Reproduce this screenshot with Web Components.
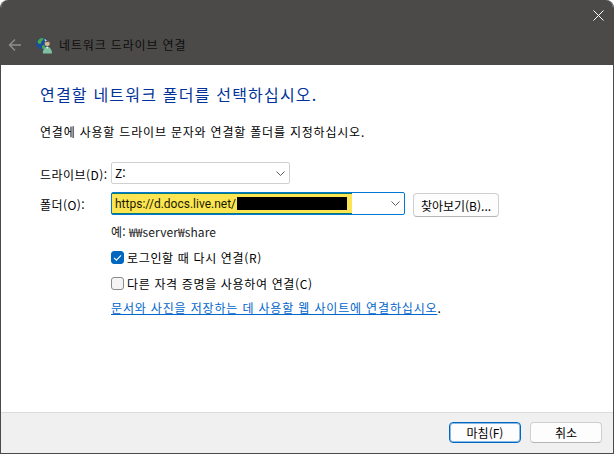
<!DOCTYPE html>
<html lang="ko">
<head>
<meta charset="utf-8">
<title>네트워크 드라이브 연결</title>
<style>
  html, body { margin: 0; padding: 0; background: #fff; }
  body { font-family: "Noto Sans CJK KR", "Liberation Sans", sans-serif; font-size: 12px; color: #000; }
</style>
</head>
<body>

<wizard-window>
  <form-row label="드라이브(D):" slot="form">
    <combo-box value="Z:" width="179"></combo-box>
  </form-row>
  <form-row label="폴더(O):" slot="form" gap="8">
    <combo-box value="https://d.docs.live.net/" width="294" focused></combo-box>
    <win-button>찾아보기(B)...</win-button>
  </form-row>
  <win-check checked slot="options">로그인할 때 다시 연결(R)</win-check>
  <win-check slot="options">다른 자격 증명을 사용하여 연결(C)</win-check>
  <win-button slot="footer" primary>마침(F)</win-button>
  <win-button slot="footer" wide>취소</win-button>
</wizard-window>

<script>
const FONT = '"Noto Sans CJK KR", "Liberation Sans", sans-serif';

// Outer window with title bar, body and footer
class WizardWindow extends HTMLElement {
  constructor() {
    super();
    this.attachShadow({ mode: 'open' });
    this.shadowRoot.innerHTML = `
      <style>
        :host {
          display: flex;
          flex-direction: column;
          width: 614px;
          height: 454px;
          box-sizing: border-box;
          overflow: hidden;
          border-radius: 8px 8px 0 0;
          border: 1px solid #4b4a48;
          border-top: none;
          background: #fff;
          font-family: ${FONT};
        }
        .titlebar {
          height: 65px;
          margin: 0 -1px;
          background: #4b4a48;
          display: flex;
          flex-direction: column;
          flex: none;
        }
        .caption { height: 30px; display: flex; justify-content: flex-end; }
        .close { width: 32px; height: 30px; display: flex; align-items: center; justify-content: center; }
        .nav { display: flex; align-items: center; height: 30px; }
        .back { margin-left: 8px; width: 14px; height: 14px; }
        .globe { margin-left: 14px; width: 17px; height: 17px; }
        .title { margin-left: 6px; font-size: 12px; color: #0d0d0d; line-height: 16px; letter-spacing: 0.85px; }
        .content { flex: 1; padding: 19px 0 0 39px; min-height: 0; }
        h1 {
          margin: 0;
          font-size: 16px;
          font-weight: 400;
          line-height: 20px;
          color: #003399;
          letter-spacing: 1.2px;
        }
        p { margin: 19px 0 0; line-height: 17px; font-size: 12px; letter-spacing: 0.8px; }
        .form { margin-top: 22px; display: flex; flex-direction: column; gap: 8px; }
        .example { margin: 6px 0 0 71px; line-height: 17px; font-size: 12px; color: #1a1a1a; letter-spacing: 0.1px; }
        .options { margin: 9px 0 0 71px; display: flex; flex-direction: column; gap: 9px; }
        .link { margin: 7px 0 0 71px; line-height: 17px; font-size: 12px; color: #000; letter-spacing: 0.84px; }
        .link a { color: #0066cc; text-decoration: underline; }
        .footer {
          flex: none;
          box-sizing: border-box;
          height: 41px;
          background: #f0f0f0;
          border-top: 1px solid #dcdcdc;
          display: flex;
          justify-content: flex-end;
          align-items: flex-start;
          gap: 9px;
          padding: 9px 11px 0 0;
        }
      </style>
      <div class="titlebar">
        <div class="caption">
          <div class="close">
            <svg width="11" height="11" viewBox="0 0 11 11"><path d="M.5.5l10 10M10.5.5l-10 10" stroke="#fff" stroke-width="1" fill="none"/></svg>
          </div>
        </div>
        <div class="nav">
          <svg class="back" viewBox="0 0 14 14"><path d="M13 7H1.5M7 1.5L1.5 7 7 12.5" stroke="#8f8e8c" stroke-width="1.4" fill="none"/></svg>
          <svg class="globe" viewBox="0 0 17 17">
            <circle cx="6" cy="6.5" r="5.8" fill="#174f9e"/>
            <path d="M1.5 4.5C3 2 5 .8 7 1.2c1 1.6-1.6 2.4-1.8 4.2C5 7.6 2 7.4 1.5 4.5zM6.6 8.2c1.8-.8 3 .8 2.2 2.6-.7 1.4-2.6 1.6-2.8.2-.1-1.1 0-2 .6-2.8z" fill="#4fa83c"/>
            <path d="M8.4 1.8c1.4.6 2.4 1.6 2.8 2.8L9 4.4z" fill="#bcd6ee"/>
            <circle cx="11.2" cy="6.4" r="2.5" fill="#dcb791"/>
            <path d="M8.8 5.6c.2-2 4-2.4 4.8 0-1.6-.7-3.2-.7-4.8 0z" fill="#6e5230"/>
            <path d="M6.8 16.5c0-4 1.8-6.8 4.4-6.8s4.8 2.8 4.8 6.8z" fill="#7fc0a0"/>
            <path d="M10.2 9.8h2l-1 2.4z" fill="#e8f2ec"/>
          </svg>
          <span class="title">네트워크 드라이브 연결</span>
        </div>
      </div>
      <div class="content">
        <h1>연결할 네트워크 폴더를 선택하십시오.</h1>
        <p>연결에 사용할 드라이브 문자와 연결할 폴더를 지정하십시오.</p>
        <div class="form"><slot name="form"></slot></div>
        <div class="example">예: ₩₩server₩share</div>
        <div class="options"><slot name="options"></slot></div>
        <div class="link"><a>문서와 사진을 저장하는 데 사용할 웹 사이트에 연결하십시오</a>.</div>
      </div>
      <div class="footer"><slot name="footer"></slot></div>
    `;
  }
}

// Label column plus the controls of one form line
class FormRow extends HTMLElement {
  constructor() {
    super();
    this.attachShadow({ mode: 'open' });
  }

  connectedCallback() {
    const gap = this.getAttribute('gap') || 0;
    this.shadowRoot.innerHTML = `
      <style>
        :host { display: flex; align-items: flex-start; font-size: 12px; }
        .label { width: 71px; flex: none; padding-top: 4px; line-height: 18px; letter-spacing: 0.45px; white-space: nowrap; }
        .controls { display: flex; gap: ${gap}px; align-items: flex-start; }
      </style>
      <div class="label">${this.getAttribute('label')}</div>
      <div class="controls"><slot></slot></div>
    `;
  }
}

// Drop-down box, optionally focused with the autofill highlight and redaction
class ComboBox extends HTMLElement {
  constructor() {
    super();
    this.attachShadow({ mode: 'open' });
  }

  connectedCallback() {
    const focused = this.hasAttribute('focused');
    const value = this.getAttribute('value') || '';
    const inner = focused
      ? `<div class="fill"><span>${value}</span><i class="redact"></i></div>`
      : `<span class="plain">${value}</span>`;
    this.shadowRoot.innerHTML = `
      <style>
        :host {
          display: flex;
          box-sizing: border-box;
          width: ${this.getAttribute('width')}px;
          height: ${focused ? 23 : 22}px;
          border: 1px solid ${focused ? '#0078d4' : '#d0d0d0'};
          border-radius: 2px;
          background: #fff;
          font-size: 12px;
          align-items: stretch;
        }
        .plain { padding-left: 3px; line-height: 20px; flex: 1; }
        .fill {
          display: flex;
          align-items: center;
          width: 240px;
          flex: none;
          padding-left: 3px;
          box-sizing: border-box;
          background: #fce552;
          border: 0 solid #0b7a75;
          border-width: 1px 0;
          color: #1a1a00;
          font-family: Roboto, "Liberation Sans", sans-serif;
        }
        .redact { display: block; width: 110px; height: 13px; background: #000; margin-left: 1px; }
        .spacer { flex: 1; }
        svg { flex: none; align-self: center; margin-right: 4px; }
      </style>
      ${inner}
      <span class="spacer"></span>
      <svg width="9" height="5" viewBox="0 0 9 5"><path d="M.5.5l4 4 4-4" stroke="#5c5c5c" fill="none"/></svg>
    `;
  }
}

// Standard push button
class WinButton extends HTMLElement {
  constructor() {
    super();
    this.attachShadow({ mode: 'open' });
    this.shadowRoot.innerHTML = `
      <style>
        :host {
          display: flex;
          align-items: center;
          justify-content: center;
          box-sizing: border-box;
          height: 24px;
          width: 86px;
          margin-top: 1px;
          background: #fdfdfd;
          border: 1px solid #cfcfcf;
          border-bottom-color: #b5b5b5;
          border-radius: 4px;
          font-size: 12px;
          color: #000;
        }
        :host([primary]), :host([wide]) { width: 72px; height: 21px; margin-top: 0; }
        :host([primary]) {
          border: 1px solid #0067c0;
          box-shadow: inset 0 0 0 1px rgba(0, 103, 192, 0.45);
        }
      </style>
      <slot></slot>
    `;
  }
}

// Check box with label
class WinCheck extends HTMLElement {
  constructor() {
    super();
    this.attachShadow({ mode: 'open' });
  }

  connectedCallback() {
    const mark = this.hasAttribute('checked')
      ? `<svg width="13" height="13" viewBox="0 0 13 13"><path d="M3 6.8l2.4 2.4L10 4.4" stroke="#fff" stroke-width="1.1" fill="none"/></svg>`
      : '';
    this.shadowRoot.innerHTML = `
      <style>
        :host { display: flex; align-items: center; gap: 3px; height: 17px; font-size: 12px; letter-spacing: 0.65px; }
        .box {
          width: 13px;
          height: 13px;
          box-sizing: border-box;
          border-radius: 3px;
          display: flex;
          align-items: center;
          justify-content: center;
          border: 1px solid #8a8a8a;
          background: #f4f4f4;
        }
        :host([checked]) .box { background: #0067c0; border-color: #0067c0; }
        svg { flex: none; margin: -1px; }
      </style>
      <span class="box">${mark}</span>
      <span><slot></slot></span>
    `;
  }
}

customElements.define('wizard-window', WizardWindow);
customElements.define('form-row', FormRow);
customElements.define('combo-box', ComboBox);
customElements.define('win-button', WinButton);
customElements.define('win-check', WinCheck);
</script>
</body>
</html>
